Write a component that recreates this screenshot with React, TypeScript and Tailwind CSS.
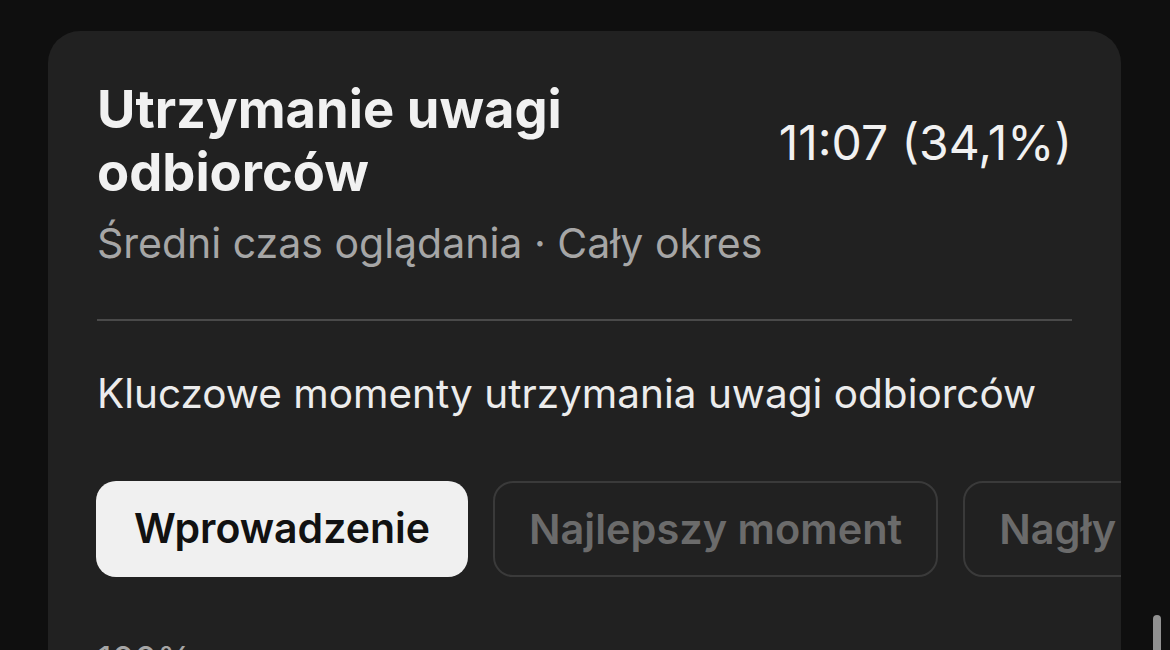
export default function App() {
  const chips = ["Wprowadzenie", "Najlepszy moment", "Nagły spadek"];

  return (
    <div className="relative h-[650px] overflow-hidden bg-[#0f0f0f] pt-[31px] font-['Inter','Noto_Sans',sans-serif]">
      {/* retention card */}
      <div className="ml-[48px] mr-[49px] h-[700px] overflow-hidden rounded-[32px] bg-[#212121] px-[49px] pt-[47px]">
        <div className="flex items-start justify-between">
          <div>
            <h2 className="text-[52.5px] leading-[63px] font-bold text-[#f1f1f1]">
              Utrzymanie uwagi
              <br />
              odbiorców
            </h2>
            <p className="mt-[14px] text-[41px] leading-[50px] text-[#a6a6a6]">
              Średni czas oglądania · Cały okres
            </p>
          </div>
          <div className="mt-[36px] text-[48px] leading-[58px] text-[#f1f1f1]">11:07 (34,1%)</div>
        </div>

        <div className="mt-[51px] h-[2px] bg-[#4a4a4a]" />

        <p className="mt-[49px] text-[40.5px] leading-[48px] text-[#ececec]">
          Kluczowe momenty utrzymania uwagi odbiorców
        </p>

        <div className="-ml-px mt-[63px] flex gap-[25px] whitespace-nowrap">
          {chips.map((c, i) =>
            i === 0 ? (
              <div
                key={c}
                className="flex h-[96px] shrink-0 items-center rounded-[20px] bg-[#f0f0f0] px-[38px] text-[41px] font-semibold text-[#111111]"
              >
                {c}
              </div>
            ) : (
              <div
                key={c}
                className="flex h-[96px] shrink-0 items-center rounded-[20px] border-2 border-[#3a3a3a] px-[34px] text-[41.5px] font-semibold text-[#6b6b6b]"
              >
                {c}
              </div>
            )
          )}
        </div>

        <p className="mt-[60px] text-[36px] leading-[44px] text-[#a6a6a6]">100%</p>
      </div>

      {/* scroll indicator */}
      <div className="absolute right-[9px] top-[615px] h-[60px] w-[8px] rounded-full bg-[#919191]" />
    </div>
  );
}
